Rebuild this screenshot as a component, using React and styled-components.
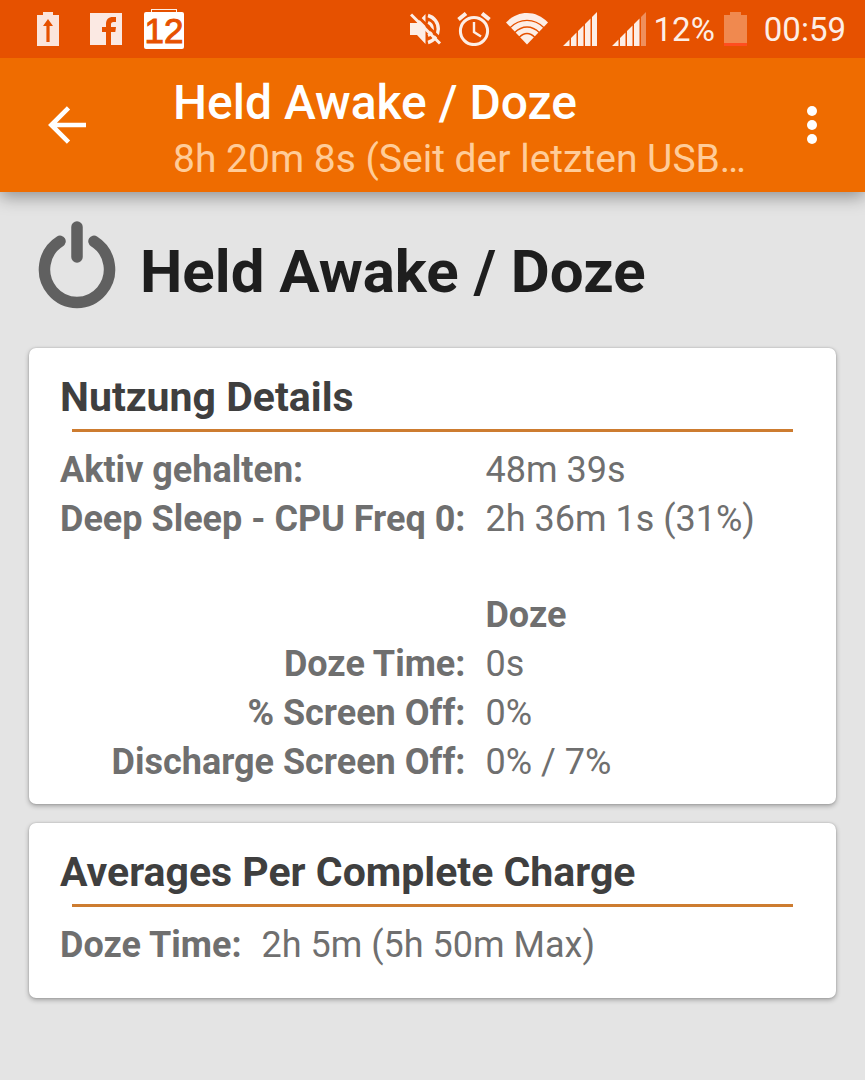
import React from "react";
import styled, { createGlobalStyle } from "styled-components";

const GlobalStyle = createGlobalStyle`
  *, *::before, *::after { box-sizing: border-box; }
  body {
    margin: 0;
    background: #e4e4e4;
    color: #6f6f6f;
    font-family: Roboto, "Liberation Sans", sans-serif;
  }
`;

const StatusBar = styled.div`
  position: relative;
  z-index: 1;
  display: flex;
  align-items: center;
  justify-content: space-between;
  height: 58px;
  padding: 0 19px 0 37px;
  background: #e65100;
  color: #fdeee6;
`;

const StatusGroup = styled.div`
  display: flex;
  align-items: center;
  gap: ${(p) => p.$gap}px;
`;

const StatusText = styled.span`
  font-size: 33px;
  line-height: 40px;
  margin-top: 2px;
  white-space: nowrap;
`;

const Clock = styled(StatusText)`
  margin-left: 8px;
`;

const Icon = styled.svg`
  display: block;
  flex: none;
`;

const CalendarBadge = styled.div`
  display: flex;
  flex-direction: column;
  align-items: center;
  width: 40px;
`;

const CalendarRing = styled.div`
  width: 26px;
  height: 3px;
  border: 1px solid #fdeee6;
  border-bottom: 0;
`;

const CalendarDay = styled.div`
  width: 100%;
  border-radius: 2px;
  background: #ffffff;
  color: #e65100;
  font: 35px/37px "Liberation Sans", Arial, sans-serif;
  text-align: center;
  -webkit-text-stroke: 1px #e65100;
`;

const AppBar = styled.header`
  display: flex;
  align-items: center;
  height: 134px;
  padding: 0 29px 0 43px;
  background: #ef6c00;
  box-shadow: 0 5px 16px rgba(0, 0, 0, 0.36);
`;

const IconButton = styled.button`
  display: flex;
  justify-content: center;
  width: 48px;
  padding: 8px 0;
  border: 0;
  background: none;
  color: #ffffff;
  cursor: pointer;
`;

const BarTitles = styled.div`
  flex: 1;
  min-width: 0;
  margin-left: 82px;
  padding-top: 11px;
`;

const BarTitle = styled.div`
  font-size: 48px;
  font-weight: 500;
  line-height: 56px;
  color: #ffffff;
`;

const BarSubtitle = styled.div`
  font-size: 39px;
  line-height: 56px;
  color: #ffcc99;
  white-space: nowrap;
  overflow: hidden;
  text-overflow: ellipsis;
`;

const Main = styled.main`
  display: flex;
  flex-direction: column;
  gap: 19px;
  padding: 29px 29px 40px;
`;

const PageHead = styled.div`
  display: flex;
  align-items: center;
  gap: 24px;
  padding: 0 9px;
  margin-bottom: 20px;
`;

const PageTitle = styled.h1`
  margin: 14px 0 0;
  font-size: 60px;
  font-weight: 700;
  line-height: 72px;
  color: #1e1e1e;
`;

const Card = styled.section`
  padding: 25px 31px ${(p) => p.$bottom}px;
  border-radius: 7px;
  background: #ffffff;
  box-shadow: 0 2px 5px rgba(0, 0, 0, 0.3), 0 0 2px rgba(0, 0, 0, 0.2);
`;

const CardTitle = styled.h2`
  margin: 0;
  font-size: 41px;
  font-weight: 700;
  line-height: 48px;
  color: #3f3f3f;
`;

const Rule = styled.hr`
  height: 3px;
  margin: 8px 12px 14px;
  border: 0;
  background: #cd7c30;
`;

const Table = styled.table`
  border-collapse: collapse;
  font-size: 36px;
  line-height: 49px;
  white-space: nowrap;
`;

const Label = styled.th`
  padding: 0 20px 0 0;
  font-weight: 700;
  text-align: ${(p) => p.$align || "left"};
`;

const Value = styled.td`
  padding: 0;
`;

const ColumnHead = styled.th`
  padding: 0;
  font-weight: 700;
  text-align: left;
`;

const SpacerCell = styled.td`
  height: 47px;
  padding: 0;
`;

function ChargingIcon() {
  return (
    <Icon width="22" height="34" viewBox="0 0 22 34" aria-hidden="true">
      <path d="M6 0h10v3h6v31H0V3h6z" fill="#fbe5dc" />
      <path d="M11 7l5 7h-3.400v16H9.400V14H6z" fill="#e65100" />
    </Icon>
  );
}

function FacebookIcon() {
  return (
    <Icon width="32" height="32" viewBox="0 0 32 32" aria-hidden="true">
      <rect width="32" height="32" fill="#fbe9e3" />
      <path
        d="M16 32V19h-4v-5h4v-3c0-4.600 2.600-7 6.800-7H26v5h-2.400C21.600 9 21 10 21 11.600V14h5l-.7 5H21v13z"
        fill="#e65100"
      />
    </Icon>
  );
}

function MutedIcon() {
  return (
    <Icon width="32" height="32" viewBox="0 0 32 32" fill="none" aria-hidden="true">
      <path d="M0 10h7l8.500-9v30L7 22H0z" fill="#fdeee6" />
      <path d="M18 9.500a7 7 0 0 1 0 13" stroke="#fdeee6" strokeWidth="3" />
      <path d="M18 2.500a14 14 0 0 1 0 27" stroke="#fdeee6" strokeWidth="3.400" />
      <path d="M3.500 -1L33 28.500" stroke="#e65100" strokeWidth="3" />
      <path d="M1 1.500L30 30.500" stroke="#fdeee6" strokeWidth="3" />
    </Icon>
  );
}

function AlarmIcon() {
  return (
    <Icon width="34" height="34" viewBox="0 0 34 34" fill="none" stroke="#fdeee6" aria-hidden="true">
      <circle cx="17" cy="19" r="13.600" strokeWidth="3" />
      <path d="M17 10v10l7 4.500" strokeWidth="2.400" />
      <path d="M1.500 7.500L9 1.500M32.500 7.500L25 1.500" strokeWidth="4" />
    </Icon>
  );
}

function WifiIcon() {
  return (
    <Icon width="42" height="32" viewBox="0 0 42 32" fill="none" aria-hidden="true">
      <path d="M21 31.500L0 9.500C6 3.300 13.200 0 21 0s15 3.300 21 9.500z" fill="#fdeee6" />
      <g stroke="#e65100" strokeWidth="1.300">
        <path d="M4 14.800C9 9.700 14.500 7.400 21 7.400s12 2.300 17 7.400" />
        <path d="M8.500 19.700c4-3.900 8-5.700 12.500-5.700s8.500 1.800 12.500 5.700" />
        <path d="M13 24.500c2.600-2.700 5.100-4 8-4s5.400 1.300 8 4" />
      </g>
    </Icon>
  );
}

function SignalIcon({ weak }) {
  return (
    <Icon width="34" height="34" viewBox="0 0 34 34" fill="#fdeee6" aria-hidden="true">
      <path d="M0 34l6.500-6.500V34zM8 26l5.500-5.500V34H8zM15 19l5.500-5.500V34H15zM22 12l5.500-5.500V34H22z" />
      <path d="M29 5l5-5v34h-5z" opacity={weak ? 0.4 : 1} />
    </Icon>
  );
}

function BatteryIcon() {
  return (
    <Icon width="23" height="34" viewBox="0 0 23 34" aria-hidden="true">
      <path d="M6 0h11v3h6v28H0V3h6z" fill="#f0894f" />
      <path d="M0 31h23v3H0z" fill="#ff4d1f" />
    </Icon>
  );
}

function BackIcon() {
  return (
    <Icon width="38" height="38" viewBox="0 0 38 38" fill="none" stroke="currentColor" strokeWidth="4.600" aria-hidden="true">
      <path d="M38 19H4M20.500 1.800L3.300 19l17.200 17.200" />
    </Icon>
  );
}

function MoreIcon() {
  return (
    <Icon width="10" height="38" viewBox="0 0 10 38" fill="currentColor" aria-hidden="true">
      <circle cx="5" cy="5" r="5" />
      <circle cx="5" cy="19" r="5" />
      <circle cx="5" cy="33" r="5" />
    </Icon>
  );
}

function PowerIcon() {
  return (
    <Icon width="78" height="88" viewBox="0 0 78 88" fill="none" stroke="#606060" strokeLinecap="round" strokeWidth="11.500" aria-hidden="true">
      <path d="M39 6v30" />
      <path d="M22 20.300A32.500 33 0 1 0 56 20.300" />
    </Icon>
  );
}

const usage = [
  { label: "Aktiv gehalten:", value: "48m 39s" },
  { label: "Deep Sleep - CPU Freq 0:", value: "2h 36m 1s (31%)" },
];

const doze = [
  { label: "Doze Time:", value: "0s" },
  { label: "% Screen Off:", value: "0%" },
  { label: "Discharge Screen Off:", value: "0% / 7%" },
];

function DataRow({ label, value, align }) {
  return (
    <tr>
      <Label scope="row" $align={align}>{label}</Label>
      <Value>{value}</Value>
    </tr>
  );
}

export default function App() {
  return (
    <>
      <GlobalStyle />
      <StatusBar>
        <StatusGroup $gap={22}>
          <StatusGroup $gap={31}>
            <ChargingIcon />
            <FacebookIcon />
          </StatusGroup>
          <CalendarBadge>
            <CalendarRing />
            <CalendarDay>12</CalendarDay>
          </CalendarBadge>
        </StatusGroup>
        <StatusGroup $gap={8}>
          <StatusGroup $gap={15}>
            <MutedIcon />
            <AlarmIcon />
            <WifiIcon />
            <SignalIcon />
            <SignalIcon weak />
          </StatusGroup>
          <StatusGroup $gap={9}>
            <StatusText>12%</StatusText>
            <BatteryIcon />
            <Clock>00:59</Clock>
          </StatusGroup>
        </StatusGroup>
      </StatusBar>
      <AppBar>
        <IconButton type="button" aria-label="Zurück">
          <BackIcon />
        </IconButton>
        <BarTitles>
          <BarTitle>Held Awake / Doze</BarTitle>
          <BarSubtitle>8h 20m 8s (Seit der letzten USB…</BarSubtitle>
        </BarTitles>
        <IconButton type="button" aria-label="Menü">
          <MoreIcon />
        </IconButton>
      </AppBar>
      <Main>
        <PageHead>
          <PowerIcon />
          <PageTitle>Held Awake / Doze</PageTitle>
        </PageHead>
        <Card $bottom={17}>
          <CardTitle>Nutzung Details</CardTitle>
          <Rule />
          <Table>
            <tbody>
              {usage.map((row) => (
                <DataRow key={row.label} {...row} />
              ))}
              <tr>
                <SpacerCell colSpan={2} />
              </tr>
              <tr>
                <Value />
                <ColumnHead scope="col">Doze</ColumnHead>
              </tr>
              {doze.map((row) => (
                <DataRow key={row.label} {...row} align="right" />
              ))}
            </tbody>
          </Table>
        </Card>
        <Card $bottom={28}>
          <CardTitle>Averages Per Complete Charge</CardTitle>
          <Rule />
          <Table>
            <tbody>
              <DataRow label="Doze Time:" value="2h 5m (5h 50m Max)" />
            </tbody>
          </Table>
        </Card>
      </Main>
    </>
  );
}
